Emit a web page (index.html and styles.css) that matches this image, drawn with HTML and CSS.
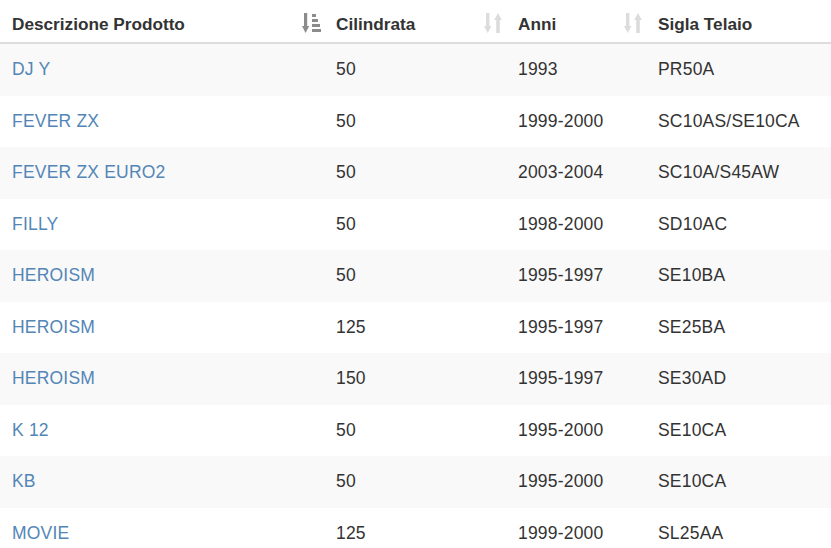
FILE: index.html
```html
<!DOCTYPE html>
<html>
<head>
<meta charset="utf-8">
<link rel="stylesheet" href="styles.css">
</head>
<body>
<div class="wrap">
<table class="grid">
<thead>
<tr>
<th class="c1"><span class="lbl">Descrizione Prodotto</span>
<svg class="sort on" viewBox="0 0 19 20"><rect x="2" y="0" width="3.2" height="14"/><polygon points="0,13 7.2,13 3.6,20"/><rect x="10" y="1" width="4" height="3"/><rect x="10" y="6" width="6" height="3"/><rect x="10" y="11" width="8" height="3"/><rect x="10" y="16" width="9" height="3"/></svg></th>
<th class="c2"><span class="lbl">Cilindrata</span>
<svg class="sort" viewBox="0 0 19 20"><rect x="2" y="0" width="3.4" height="14"/><polygon points="0,13 7.4,13 3.7,20"/><rect x="12.2" y="6" width="3.6" height="14"/><polygon points="10.2,7 17.8,7 14,0"/></svg></th>
<th class="c3"><span class="lbl">Anni</span>
<svg class="sort" viewBox="0 0 19 20"><rect x="2" y="0" width="3.4" height="14"/><polygon points="0,13 7.4,13 3.7,20"/><rect x="12.2" y="6" width="3.6" height="14"/><polygon points="10.2,7 17.8,7 14,0"/></svg></th>
<th class="c4"><span class="lbl">Sigla Telaio</span>
<svg class="sort" viewBox="0 0 19 20"><rect x="2" y="0" width="3.4" height="14"/><polygon points="0,13 7.4,13 3.7,20"/><rect x="12.2" y="6" width="3.6" height="14"/><polygon points="10.2,7 17.8,7 14,0"/></svg></th>
</tr>
</thead>
<tbody>
<tr><td><a href="#">DJ Y</a></td><td>50</td><td>1993</td><td>PR50A</td></tr>
<tr><td><a href="#">FEVER ZX</a></td><td>50</td><td>1999-2000</td><td>SC10AS/SE10CA</td></tr>
<tr><td><a href="#">FEVER ZX EURO2</a></td><td>50</td><td>2003-2004</td><td>SC10A/S45AW</td></tr>
<tr><td><a href="#">FILLY</a></td><td>50</td><td>1998-2000</td><td>SD10AC</td></tr>
<tr><td><a href="#">HEROISM</a></td><td>50</td><td>1995-1997</td><td>SE10BA</td></tr>
<tr><td><a href="#">HEROISM</a></td><td>125</td><td>1995-1997</td><td>SE25BA</td></tr>
<tr><td><a href="#">HEROISM</a></td><td>150</td><td>1995-1997</td><td>SE30AD</td></tr>
<tr><td><a href="#">K 12</a></td><td>50</td><td>1995-2000</td><td>SE10CA</td></tr>
<tr><td><a href="#">KB</a></td><td>50</td><td>1995-2000</td><td>SE10CA</td></tr>
<tr><td><a href="#">MOVIE</a></td><td>125</td><td>1999-2000</td><td>SL25AA</td></tr>
</tbody>
</table>
</div>
</body>
</html>
```
FILE: styles.css
```css
html, body {
  margin: 0;
  padding: 0;
  background: #fff;
}
body {
  font-family: "Liberation Sans", Arial, Helvetica, sans-serif;
  font-size: 17.5px;
  color: #333;
}
.wrap {
  width: 831px;
  height: 548px;
  overflow: hidden;
}
.grid {
  border-collapse: collapse;
  border-spacing: 0;
  table-layout: fixed;
  width: 1000px;
}
.grid th, .grid td {
  text-align: left;
  padding: 15px 12px;
  line-height: 21.5px;
  white-space: nowrap;
}
.grid td {
  letter-spacing: 0.2px;
}
.grid th {
  position: relative;
  padding: 14px 12px 6.5px;
  font-size: 17.2px;
  font-weight: bold;
  border-bottom: 2px solid #ddd;
}
.c1 { width: 300px; }
.c2 { width: 158px; }
.c3 { width: 116px; }
.c4 { width: 330px; }
.grid tbody tr:nth-child(odd) td {
  background: #f9f9f9;
}
.grid a {
  color: #5386b6;
  text-decoration: none;
}
.sort {
  position: absolute;
  right: 3px;
  top: 13px;
  width: 19px;
  height: 20px;
  fill: #dcdcdc;
}
.sort.on {
  fill: #8c8c8c;
}
```
